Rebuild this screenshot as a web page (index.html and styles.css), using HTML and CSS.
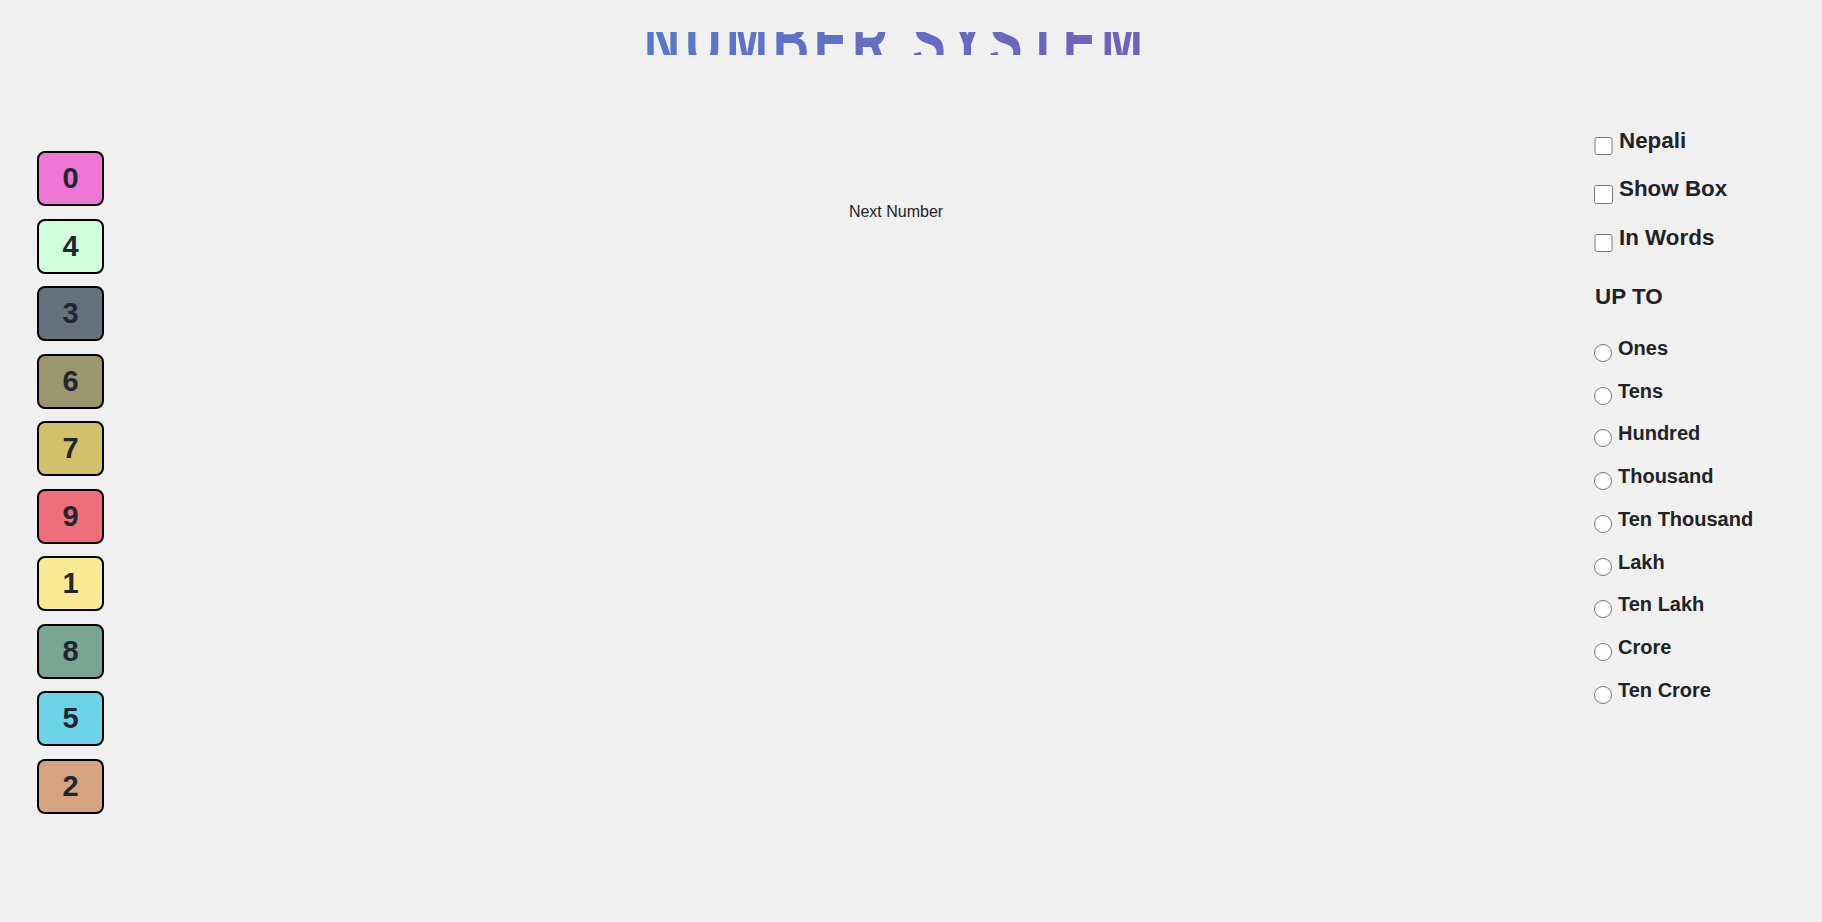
FILE: index.html
```html
<!DOCTYPE html>
<html lang="en">
<head>
<meta charset="utf-8">
<title>Number System</title>
<link rel="stylesheet" href="styles.css">
</head>
<body>
<div class="page">
  <aside class="digits">
    <div class="digit d0">0</div>
    <div class="digit d4">4</div>
    <div class="digit d3">3</div>
    <div class="digit d6">6</div>
    <div class="digit d7">7</div>
    <div class="digit d9">9</div>
    <div class="digit d1">1</div>
    <div class="digit d8">8</div>
    <div class="digit d5">5</div>
    <div class="digit d2">2</div>
  </aside>
  <main class="main">
    <div class="title-clip"><h1 class="title">NUMBER SYSTEM</h1></div>
    <div class="next-wrap"><button class="next" type="button">Next Number</button></div>
  </main>
  <aside class="options">
    <label class="check-row"><input type="checkbox"><span>Nepali</span></label>
    <label class="check-row"><input type="checkbox"><span>Show Box</span></label>
    <label class="check-row"><input type="checkbox"><span>In Words</span></label>
    <h3 class="upto">UP TO</h3>
    <label class="radio-row"><input type="radio" name="upto"><span>Ones</span></label>
    <label class="radio-row"><input type="radio" name="upto"><span>Tens</span></label>
    <label class="radio-row"><input type="radio" name="upto"><span>Hundred</span></label>
    <label class="radio-row"><input type="radio" name="upto"><span>Thousand</span></label>
    <label class="radio-row"><input type="radio" name="upto"><span>Ten Thousand</span></label>
    <label class="radio-row"><input type="radio" name="upto"><span>Lakh</span></label>
    <label class="radio-row"><input type="radio" name="upto"><span>Ten Lakh</span></label>
    <label class="radio-row"><input type="radio" name="upto"><span>Crore</span></label>
    <label class="radio-row"><input type="radio" name="upto"><span>Ten Crore</span></label>
  </aside>
</div>
</body>
</html>
```

FILE: styles.css
```css
html, body {
  margin: 0;
  padding: 0;
}

body {
  background: #f0f0f0;
  font-family: "Liberation Sans", Arial, sans-serif;
  color: #1f2328;
  height: 922px;
  overflow: hidden;
}

.page {
  display: grid;
  grid-template-columns: 198px 1fr 228px;
  align-items: start;
}

/* left column of digit tiles */
.digits {
  display: flex;
  flex-direction: column;
  gap: 12.5px;
  padding: 151px 0 0 37px;
}

.digit {
  box-sizing: border-box;
  width: 67px;
  height: 55px;
  border: 2px solid #000;
  border-radius: 8px;
  display: flex;
  align-items: center;
  justify-content: center;
  font-size: 29px;
  font-weight: bold;
  color: #212631;
}

.d0 { background: #ec77d4; }
.d4 { background: #d0fddc; }
.d3 { background: #65727e; }
.d6 { background: #9c966e; }
.d7 { background: #d2c06a; }
.d9 { background: #f06e7a; }
.d1 { background: #fbea94; }
.d8 { background: #7aa592; }
.d5 { background: #6dd4e7; }
.d2 { background: #d5a380; }

/* centre column */
.main {
  min-width: 0;
}

.title-clip {
  margin-top: 32px;
  height: 22.5px;
  overflow: hidden;
  display: flex;
  justify-content: center;
  align-items: flex-start;
}

.title {
  margin: -33px 0 0 0;
  font-size: 50px;
  line-height: 50px;
  font-weight: bold;
  letter-spacing: 5px;
  white-space: nowrap;
  background: linear-gradient(90deg, #5679cb, #7360bd);
  -webkit-background-clip: text;
  background-clip: text;
  color: transparent;
  transform: scaleY(1.64);
  transform-origin: top center;
}

.next-wrap {
  margin-top: 148.6px;
  text-align: center;
  line-height: 18px;
}

.next {
  background: none;
  border: 0;
  padding: 0;
  margin: 0;
  font-family: "Liberation Sans", Arial, sans-serif;
  font-size: 16px;
  line-height: 18px;
  color: #1f2328;
  cursor: pointer;
}

/* right column of options */
.options {
  padding-top: 127.5px;
  display: flex;
  flex-direction: column;
  align-items: flex-start;
}

.check-row {
  display: flex;
  align-items: flex-start;
  height: 26px;
  font-size: 22.4px;
  line-height: 26px;
  font-weight: bold;
  margin-bottom: 22.5px;
}

.check-row input {
  flex: none;
  width: 18.5px;
  height: 18.5px;
  margin: 9.2px 6.5px 0 0;
}

.check-row:nth-child(3) {
  margin-bottom: 33.7px;
}

.upto {
  margin: 0 0 25.9px 1px;
  height: 26px;
  font-size: 22.4px;
  line-height: 26px;
  font-weight: bold;
}

.radio-row {
  display: flex;
  align-items: flex-start;
  height: 24px;
  font-size: 20px;
  line-height: 24px;
  font-weight: bold;
  margin-bottom: 18.7px;
}

.radio-row input {
  flex: none;
  width: 18px;
  height: 18px;
  margin: 8px 6px 0 0;
}
```
